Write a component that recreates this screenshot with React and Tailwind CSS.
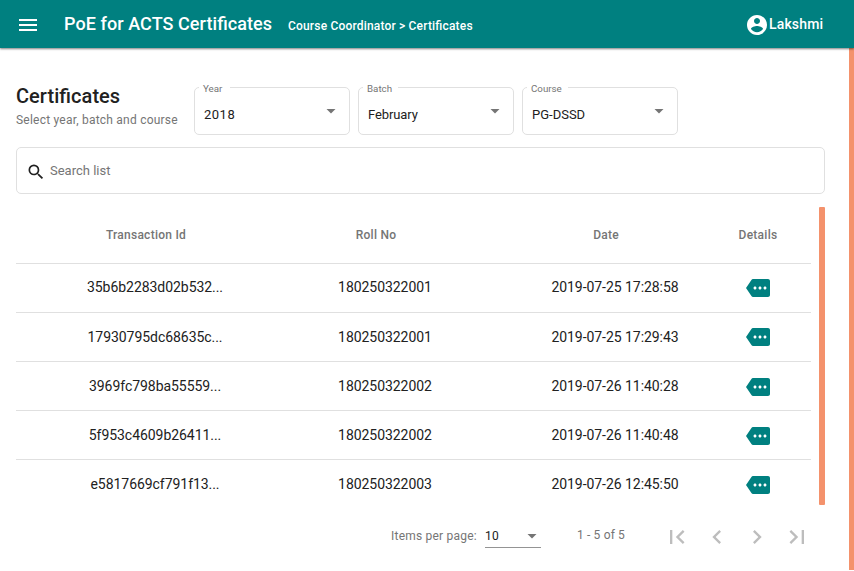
import React from "react";

const selects = [
  { label: "Year", value: "2018", notch: "w-[31px]", ls: "tracking-[0.5px]" },
  { label: "Batch", value: "February", notch: "w-[35px]", ls: "tracking-[-0.1px]" },
  { label: "Course", value: "PG-DSSD", notch: "w-[41px]", ls: "tracking-[0px]" },
];

const rows = [
  { cells: ["35b6b2283d02b532...", "180250322001", "2019-07-25 17:28:58"], text: "pb-0.5", icon: "" },
  { cells: ["17930795dc68635c...", "180250322001", "2019-07-25 17:29:43"], text: "", icon: "" },
  { cells: ["3969fc798ba55559...", "180250322002", "2019-07-26 11:40:28"], text: "", icon: "pt-0.5" },
  { cells: ["5f953c4609b26411...", "180250322002", "2019-07-26 11:40:48"], text: "", icon: "pt-0.5" },
  { cells: ["e5817669cf791f13...", "180250322003", "2019-07-26 12:45:50"], text: "pb-0.5", icon: "" },
];

const grid = "grid grid-cols-[229px_231px_229px_58px] px-6 text-center";

function Icon({ d, className }) {
  return (
    <svg viewBox="0 0 24 24" fill="currentColor" className={className}>
      <path d={d} />
    </svg>
  );
}

const paths = {
  menu: "M3 18h18v-2H3v2zm0-5h18v-2H3v2zm0-7v2h18V6H3z",
  account:
    "M12 2C6.48 2 2 6.48 2 12s4.48 10 10 10 10-4.48 10-10S17.52 2 12 2zm0 3c1.66 0 3 1.34 3 3s-1.34 3-3 3-3-1.34-3-3 1.34-3 3-3zm0 14.2c-2.5 0-4.71-1.28-6-3.22.03-1.99 4-3.08 6-3.08 1.99 0 5.97 1.09 6 3.08-1.29 1.94-3.5 3.22-6 3.22z",
  search:
    "M15.5 14h-.79l-.28-.27A6.471 6.471 0 0 0 16 9.5 6.5 6.5 0 1 0 9.5 16c1.61 0 3.09-.59 4.23-1.57l.27.28v.79l5 4.99L20.49 19l-4.99-5zm-6 0C7.01 14 5 11.99 5 9.5S7.01 5 9.5 5 14 7.01 14 9.5 11.99 14 9.5 14z",
  more:
    "M22 3H7c-.69 0-1.23.35-1.59.88L0 12l5.41 8.11c.36.53.97.89 1.66.89H22c1.1 0 2-.9 2-2V5c0-1.1-.9-2-2-2zM9 13.5c-.83 0-1.5-.67-1.5-1.5s.67-1.5 1.5-1.5 1.5.67 1.5 1.5-.67 1.5-1.5 1.5zm5 0c-.83 0-1.5-.67-1.5-1.5s.67-1.5 1.5-1.5 1.5.67 1.5 1.5-.67 1.5-1.5 1.5zm5 0c-.83 0-1.5-.67-1.5-1.5s.67-1.5 1.5-1.5 1.5.67 1.5 1.5-.67 1.5-1.5 1.5z",
  first: "M18.41 16.59L13.82 12l4.59-4.59L17 6l-6 6 6 6zM6 6h2v12H6z",
  prev: "M15.41 7.41L14 6l-6 6 6 6 1.41-1.41L10.83 12z",
  next: "M10 6L8.59 7.41 13.17 12l-4.58 4.59L10 18l6-6z",
  last: "M5.59 7.41L10.18 12l-4.59 4.59L7 18l6-6-6-6zM16 6h2v12h-2z",
};

function Caret({ className }) {
  return (
    <svg viewBox="0 0 10 5" fill="#757575" className={`h-[5px] w-2.5 ${className}`}>
      <path d="M0.5 0h9L5 4.5z" />
    </svg>
  );
}

export default function App() {
  return (
    <div className="flex h-[571px] w-[854px] flex-col overflow-hidden bg-white font-[Roboto,sans-serif] text-[#212121] [font-feature-settings:'liga'_1]">
      <header className="z-10 flex h-12 shrink-0 items-center bg-[#008080] pr-[31px] pl-4 text-white shadow-[0_1px_2px_rgba(0,0,0,0.5)]">
        <Icon d={paths.menu} className="mt-0.5 size-6" />
        <h1 className="ml-6 w-[208px] text-[18px] leading-6 font-medium tracking-[0.07px] whitespace-nowrap">PoE for ACTS Certificates</h1>
        <p className="mt-1 ml-4 text-[12px] leading-4 font-medium tracking-[0.18px] whitespace-nowrap">Course Coordinator &gt; Certificates</p>
        <div className="ml-auto flex items-center">
          <Icon d={paths.account} className="mt-0.5 size-6" />
          <span className="w-[54px] text-[14px] leading-5 font-medium tracking-[0.15px]">Lakshmi</span>
        </div>
      </header>

      <div className="flex min-h-0 flex-1">
        <main className="w-[849px] pt-[39px] pl-4">
          <div className="flex h-12">
            <div className="w-[178px] whitespace-nowrap">
              <h2 className="-mt-[5px] text-[20px] leading-7 font-medium tracking-[0.05px]">Certificates</h2>
              <p className="mt-0.5 text-[12px] leading-4 tracking-[0.22px] text-[#757575]">Select year, batch and course</p>
            </div>
            <div className="flex gap-2">
              {selects.map((s) => (
                <div key={s.label} className="relative flex h-12 w-[156px] items-center justify-between rounded-[5px] border border-[#e0e0e0] pr-[13px] pl-[9px]">
                  <span className={`absolute -top-[5px] left-1 h-3 bg-white pl-1 text-[9.75px] leading-3 text-[#757575] ${s.notch}`}>{s.label}</span>
                  <span className={`mt-2 text-[13px] leading-4 ${s.ls}`}>{s.value}</span>
                  <Caret />
                </div>
              ))}
            </div>
          </div>

          <div className="mt-3 flex h-[47px] w-[809px] items-center rounded-[5px] border border-[#e0e0e0] pl-[9px]">
            <Icon d={paths.search} className="mt-[3px] size-5" />
            <span className="ml-1 text-[13px] leading-4 text-[#757575]">Search list</span>
          </div>

          <div className="mt-[13px] flex h-[298px] w-[809px] justify-between overflow-hidden">
            <div className="w-[795px]">
              <div className={`${grid} h-[57px] items-center border-b border-[#e0e0e0] text-[12px] font-medium tracking-[0.25px] text-[#757575]`}>
                <span className="pr-[17px]">Transaction Id</span>
                <span className="pr-[17px]">Roll No</span>
                <span className="pr-[17px]">Date</span>
                <span>Details</span>
              </div>
              {rows.map(({ cells, text, icon }) => (
                <div key={cells[0]} className={`${grid} h-[49px] items-center border-b border-[#e0e0e0] text-[14px] leading-5 tracking-[-0.05px] last:border-0`}>
                  {cells.map((c) => (
                    <span key={c} className={`pl-px ${text}`}>{c}</span>
                  ))}
                  <span className={`flex justify-center ${icon}`}>
                    <Icon d={paths.more} className="size-6 text-[#008080]" />
                  </span>
                </div>
              ))}
            </div>
            <div className="w-1.5 rounded-[1px] bg-[#f4926c]" />
          </div>

          <div className="flex h-[60px] items-center pl-[375px] text-[12px] leading-4 text-[#757575]">
            <span className="w-[94px] pt-px tracking-[0.22px]">Items per page:</span>
            <div className="mt-0.5 flex h-6 w-14 items-center justify-between border-b border-[#949494] pr-1">
              <span className="tracking-[0.2px] text-[#212121]">10</span>
              <Caret className="mt-0.5" />
            </div>
            <span className="ml-9 w-[86px] tracking-[0.15px]">1 - 5 of 5</span>
            <div className="mt-[3px] flex gap-3 text-[#bdbdbd]">
              <Icon d={paths.first} className="size-7" />
              <Icon d={paths.prev} className="size-7" />
              <Icon d={paths.next} className="size-7" />
              <Icon d={paths.last} className="size-7" />
            </div>
          </div>
        </main>
        <div className="h-[522px] w-[5px] bg-[#f4926c]" />
      </div>
    </div>
  );
}
